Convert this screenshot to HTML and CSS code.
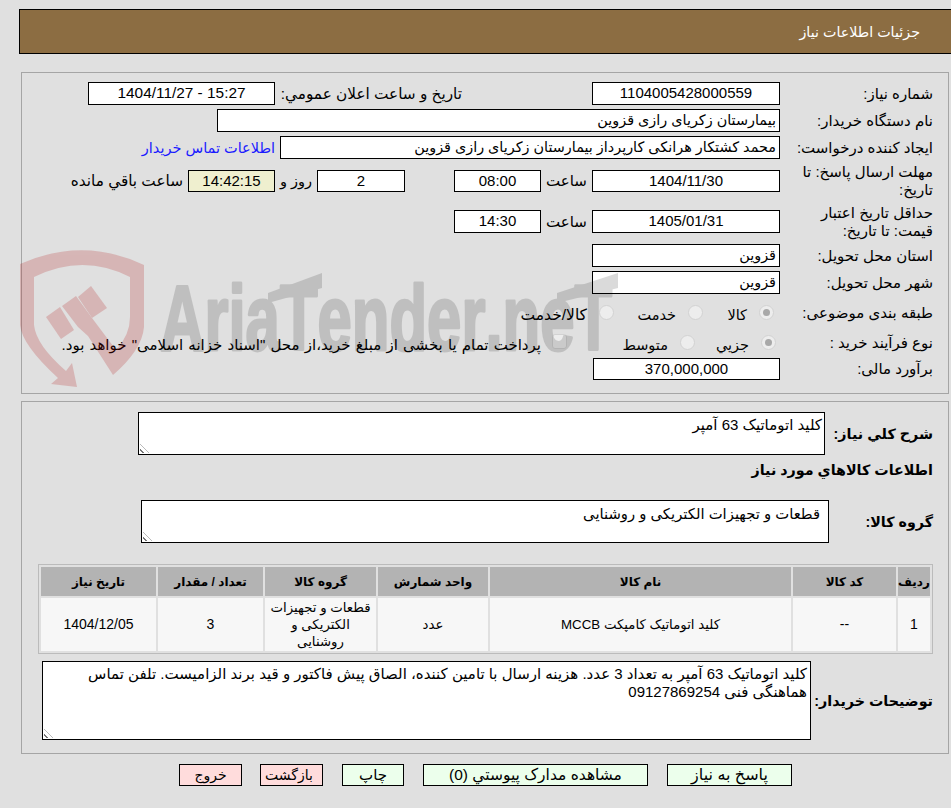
FILE: index.html
```html
<!DOCTYPE html>
<html lang="fa" dir="rtl">
<head>
<meta charset="utf-8">
<title>جزئیات اطلاعات نیاز</title>
<link rel="stylesheet" href="styles.css">
</head>
<body>
<header class="title-bar"><h1>جزئیات اطلاعات نیاز</h1></header>

<section class="panel panel-info">
  <div class="row row-1">
    <label class="lbl">شماره نیاز:</label>
    <output class="field w-188 center">1104005428000559</output>
    <label class="lbl-mid">تاریخ و ساعت اعلان عمومي:</label>
    <output class="field w-187 center date-time" dir="ltr">1404/11/27 - 15:27</output>
  </div>
  <div class="row row-2">
    <label class="lbl">نام دستگاه خریدار:</label>
    <output class="field w-563">بیمارستان زکریای رازی قزوین</output>
  </div>
  <div class="row row-3">
    <label class="lbl">ایجاد کننده درخواست:</label>
    <output class="field w-500">محمد کشتکار هرانکی کارپرداز بیمارستان زکریای رازی قزوین</output>
    <a class="contact" href="#">اطلاعات تماس خریدار</a>
  </div>
  <div class="row row-4">
    <label class="lbl">مهلت ارسال پاسخ: تا تاریخ:</label>
    <output class="field w-188 center">1404/11/30</output>
    <span class="unit">ساعت</span>
    <output class="field w-87 center">08:00</output>
    <output class="field w-88 center days">2</output>
    <span class="roz">روز و</span>
    <output class="field timer center">14:42:15</output>
    <span class="rem">ساعت باقي مانده</span>
  </div>
  <div class="row row-5">
    <label class="lbl">حداقل تاریخ اعتبار قیمت: تا تاریخ:</label>
    <output class="field w-188 center">1405/01/31</output>
    <span class="unit">ساعت</span>
    <output class="field w-87 center">14:30</output>
  </div>
  <div class="row row-6">
    <label class="lbl">استان محل تحویل:</label>
    <output class="field w-188">قزوین</output>
  </div>
  <div class="row row-7">
    <label class="lbl">شهر محل تحویل:</label>
    <output class="field w-188">قزوین</output>
  </div>
  <div class="row row-8">
    <label class="lbl">طبقه بندی موضوعی:</label>
    <div class="choice c-a"><i class="radio on"></i><span>کالا</span></div>
    <div class="choice c-b"><i class="radio"></i><span>خدمت</span></div>
    <div class="choice c-c"><i class="radio"></i><span>کالا/خدمت</span></div>
  </div>
  <div class="row row-9">
    <label class="lbl">نوع فرآیند خرید :</label>
    <div class="choice c-d"><i class="radio on"></i><span>جزیي</span></div>
    <div class="choice c-e"><i class="radio"></i><span>متوسط</span></div>
    <div class="choice c-f"><i class="check"></i><span>پرداخت تمام یا بخشی از مبلغ خرید،از محل "اسناد خزانه اسلامی" خواهد بود.</span></div>
  </div>
  <div class="row row-10">
    <label class="lbl">برآورد مالی:</label>
    <output class="field w-187 center">370,000,000</output>
  </div>
  <svg class="watermark" width="620" height="150" viewBox="20 243 620 150" aria-hidden="true">
    <g fill="rgb(176,14,14)" opacity="0.2">
      <path d="M20 264 Q83 236 144 265 L144 327 Q142 350 113 375 L88 336 L78 327 L62 306 L76 296 L92 318 L116 350 Q130 335 130 317 L130 277 Q83 253 34 277 L34 325 Q36 345 66 371 L72 363 L77 387 L51 384 L58 378 Q22 345 20 325 Z"/>
      <path d="M46 317 L60 307 L74 330 L61 339 Z"/>
      <path d="M78 297 L91 286 L107 308 L92 318 Z"/>
    </g>
    <g class="wm-ink" opacity="0.14">
      <text class="wm-text" transform="translate(160 350) scale(0.67 1)">AriaTender.neT</text>
      <path d="M268 293 L322 273 L322 288 L268 303 Z"/>
      <path d="M557 293 L618 273 L618 288 L557 303 Z"/>
    </g>
  </svg>
</section>

<section class="panel panel-items">
  <div class="desc-row">
    <label class="lbl-b">شرح کلي نیاز:</label>
    <div class="area area-desc">کلید اتوماتیک 63 آمپر<i class="grip"></i></div>
  </div>
  <h2>اطلاعات کالاهاي مورد نیاز</h2>
  <div class="group-row">
    <label class="lbl-b">گروه کالا:</label>
    <div class="area area-group">قطعات و تجهیزات الکتریکی و روشنایی<i class="grip"></i></div>
  </div>
  <table class="items">
    <thead>
      <tr>
        <th class="c1">ردیف</th><th class="c2">کد کالا</th><th class="c3">نام کالا</th><th class="c4">واحد شمارش</th><th class="c5">گروه کالا</th><th class="c6">تعداد / مقدار</th><th class="c7">تاریخ نیاز</th>
      </tr>
    </thead>
    <tbody>
      <tr>
        <td class="num">1</td><td class="num">--</td><td>کلید اتوماتیک کامپکت MCCB</td><td>عدد</td><td>قطعات و تجهیزات الکتریکی و روشنایی</td><td class="num">3</td><td class="num">1404/12/05</td>
      </tr>
    </tbody>
  </table>
  <div class="notes-row">
    <label class="lbl-b">توضیحات خریدار:</label>
    <div class="area area-notes">کلید اتوماتیک 63 آمپر به تعداد 3 عدد. هزینه ارسال با تامین کننده، الصاق پیش فاکتور و قید برند الزامیست. تلفن تماس هماهنگی فنی 09127869254<i class="grip"></i></div>
  </div>
</section>

<footer class="actions">
  <button class="btn green b-reply">پاسخ به نیاز</button>
  <button class="btn green b-docs">مشاهده مدارک پیوستي (0)</button>
  <button class="btn green b-print">چاپ</button>
  <button class="btn red b-back">بازگشت</button>
  <button class="btn red b-exit">خروج</button>
</footer>
</body>
</html>
```
FILE: styles.css
```css
* { box-sizing: border-box; }
html, body { margin: 0; padding: 0; }
body {
  width: 951px; height: 808px; overflow: hidden;
  background: #e0e0e0; color: #000;
  font-family: "Liberation Sans", "DejaVu Sans", sans-serif;
  font-size: 15px; line-height: 18px;
  padding-top: 9px;
}
.title-bar {
  height: 45px; margin-left: 19px;
  background: #8c6d42; border: 1px solid #000; border-right: 0;
  display: flex; align-items: center;
  padding-right: 31px;
}
.title-bar h1 { margin: 0; font-size: 14.3px; font-weight: normal; color: #fff; }
.panel { position: relative; width: 928px; margin-right: 2px; border: 1px solid #a5a5a5; }
.panel-info { margin-top: 18px; height: 322px; padding-top: 9px; }
.panel-items { margin-top: 7px; height: 353px; padding: 10px 15px 0 15px; }
.watermark { position: absolute; left: -2px; top: 170px; pointer-events: none; }
.wm-ink { fill: #000; stroke: #000; }
.wm-ink path { stroke: none; }
.wm-text { font-weight: bold; font-size: 92px; stroke-width: 3px; stroke-linejoin: round; direction: ltr; font-kerning: none; }

.row { display: flex; align-items: center; height: 23px; margin-bottom: 4px; padding-right: 15px; }
.lbl { width: 153px; flex: none; padding-left: 13px; }
.field {
  display: block; flex: none; height: 100%; background: #fff; border: 1px solid #000;
  line-height: 20px; padding: 0 3px; font-size: 14.4px; white-space: nowrap; overflow: hidden;
}
.center { text-align: center; font-size: 15px; }
.date-time { font-size: 15.4px; }
.w-188 { width: 188px; }
.w-187 { width: 187px; }
.w-563 { width: 563px; }
.w-500 { width: 500px; }
.w-87 { width: 87px; }
.w-88 { width: 88px; }
.lbl-mid { flex: none; width: 317px; white-space: nowrap; font-size: 15.3px; padding-right: 130px; }
.contact { color: #1a1aff; text-decoration: none; margin-right: 5px; white-space: nowrap; font-size: 14.5px; }
.row-3 { margin-bottom: 11px; }
.row-4 { height: 22px; margin-bottom: 18px; }
.row-5 { margin-bottom: 11px; }
.row-7 { margin-bottom: 6px; }
.row-8 { height: 26px; margin-bottom: 4px; }
.row-9 { height: 26px; margin-bottom: 2px; }
.row-10 { height: 22px; margin-bottom: 0; }
.unit { width: 51px; flex: none; text-align: center; }
.days { margin-right: 49px; }
.roz { width: 42px; flex: none; text-align: center; font-size: 14.5px; }
.timer { width: 87px; background: #efefcf; }
.rem { margin-right: 5px; white-space: nowrap; font-size: 15.3px; }

.choice { display: flex; align-items: center; flex: none; gap: 12px; white-space: nowrap; font-size: 14.5px; }
.choice span { margin-top: 4px; }
.radio { width: 15px; height: 15px; border-radius: 50%; background: #ededed; border: 1px solid #d2d2d2; flex: none; position: relative; margin-top: -2px; }
.radio.on::after { content: ""; position: absolute; left: 3px; top: 3px; width: 7px; height: 7px; border-radius: 50%; background: #a8a8a8; }
.check { width: 15px; height: 15px; border-radius: 3px; background: #ededed; border: 1px solid #d2d2d2; flex: none; margin-top: -4px; }
.c-a { width: 71px; margin-right: 6px; }
.c-b { width: 89px; }
.c-c span { font-size: 15.5px; }
.c-d { width: 81px; margin-right: 4px; }
.c-e { width: 128px; }
.c-f { gap: 11px; }
.c-f span { font-size: 15px; word-spacing: 1px; }

.lbl-b { font-weight: bold; font-size: 14.3px; white-space: nowrap; flex: none; }
.desc-row, .group-row { display: flex; align-items: center; height: 43px; }
.desc-row .lbl-b { width: 108px; }
.group-row .lbl-b { width: 104px; }
.area { position: relative; background: #fff; border: 1px solid #000; padding: 3px 2px; flex: none; line-height: 18px; }
.area-desc { width: 687px; height: 43px; }
.area-group { width: 688px; height: 43px; padding: 4px 8px; font-size: 14.8px; }
h2 { margin: 6px 0 21px; font-size: 14.3px; font-weight: bold; line-height: 18px; }
.grip {
  position: absolute; left: 1px; bottom: 1px; width: 9px; height: 9px;
  background: repeating-linear-gradient(45deg, transparent 0 2px, #777 2px 3px, transparent 3px 4px);
  clip-path: polygon(0 0, 100% 100%, 0 100%);
}
.items {
  border-collapse: separate; border-spacing: 2px; table-layout: fixed;
  width: 895px; margin-top: 21px; border: 1px solid #bbb; font-size: 13.3px;
}
.items th { background: #b3b3b3; height: 29px; padding: 0; font-size: 12px; font-weight: bold; }
.items td { background: #f7f7f7; height: 53px; padding: 0 4px; text-align: center; line-height: 17px; overflow: hidden; }
.items td.num { font-size: 14px; }
.c1 { width: 32px; } .c2 { width: 103px; } .c3 { width: 301px; } .c4 { width: 110px; } .c5 { width: 111px; } .c6 { width: 105px; } .c7 { width: 115px; }
.notes-row { display: flex; align-items: center; height: 79px; margin-top: 7px; }
.notes-row .lbl-b { width: 122px; }
.area-notes { width: 769px; height: 79px; padding: 3px 3px 0 30px; }

.actions { display: flex; align-items: flex-start; margin-top: 10px; padding-right: 159px; }
.btn { height: 22px; border: 1px solid #000; padding: 0; font-family: inherit; font-size: 15.5px; line-height: 20px; color: #000; flex: none; }
.green { background: #ecffec; }
.red { background: #ffdcdc; font-size: 14px; }
.b-reply { width: 125px; font-size: 16px; }
.b-docs { width: 225px; margin-right: 19px; }
.b-print { width: 62px; margin-right: 19px; font-size: 15px; }
.b-back { width: 63px; margin-right: 19px; padding-right: 5px; }
.b-exit { width: 63px; margin-right: 18px; }
```
